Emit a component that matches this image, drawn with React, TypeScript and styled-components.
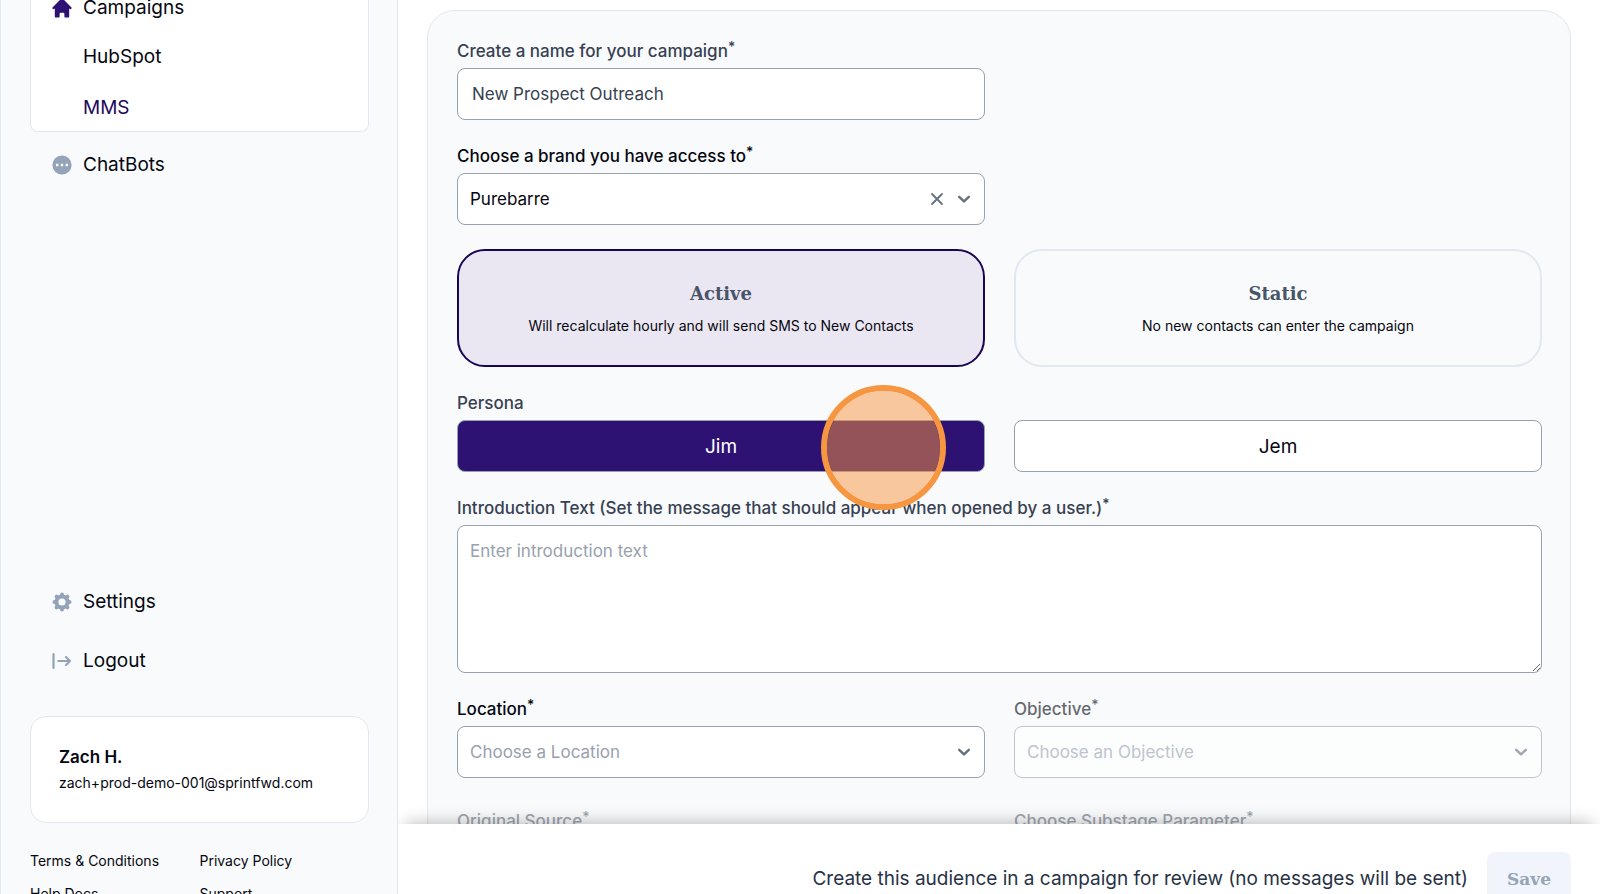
import React from "react";
import styled, { createGlobalStyle, css } from "styled-components";
import { HiHome, HiDotsCircleHorizontal } from "react-icons/hi";

const Global = createGlobalStyle`
  *, *::before, *::after { box-sizing: border-box; }
  html, body { margin: 0; height: 100%; overflow: hidden; }
  body { background: #fff; color: #05060f; font-family: Inter, "Liberation Sans", sans-serif; }
  button, input, select, textarea { font: inherit; }
`;

const slab = css`
  font-family: "DejaVu Serif", "Liberation Serif", serif;
  font-weight: 700;
`;

const Shell = styled.div`
  display: grid;
  grid-template-columns: 398px minmax(0, 1fr);
  height: calc(100vh + 40px);
`;

const Sidebar = styled.aside`
  display: flex;
  flex-direction: column;
  padding: 0 28px 0 29px;
  background: #f8fafc;
  border: 1px solid #e2e8f0;
  border-width: 0 1px;
`;

const NavGroup = styled.nav`
  margin-top: -14px;
  padding: 0 19px;
  background: #fff;
  border: 1px solid #e2e8f0;
  border-top: 0;
  border-radius: 0 0 8px 8px;
`;

const NavLink = styled.a<{ $active?: boolean; $height: number }>`
  display: flex;
  align-items: center;
  height: ${(p) => p.$height}px;
  color: ${(p) => (p.$active ? "#1d0a5c" : "#05060f")};
  font-size: 19px;
  line-height: 28px;
  text-decoration: none;
`;

const SubLink = styled(NavLink)`
  padding: 3px 0 0 33px;
`;

const IconSlot = styled.span<{ $color: string }>`
  display: flex;
  justify-content: center;
  width: 24px;
  margin-right: 9px;
  color: ${(p) => p.$color};
`;

const NavSection = styled.nav`
  padding: 0 20px;
`;

const Spacer = styled.div`
  flex: 1;
`;

const Profile = styled.section`
  margin-top: 26px;
  padding: 27px 28px 26px;
  background: #fff;
  border: 1px solid #e2e8f0;
  border-radius: 16px;
`;

const ProfileName = styled.div`
  font-size: 17px;
  font-weight: 600;
  line-height: 26px;
`;

const ProfileMail = styled.div`
  font-size: 14px;
  line-height: 26px;
`;

const LegalLinks = styled.nav`
  display: grid;
  grid-template-columns: 1fr 1fr;
  row-gap: 9px;
  padding: 26px 0 28px;
`;

const LegalLink = styled.a`
  color: #05060f;
  font-size: 14px;
  line-height: 24px;
  text-decoration: none;
`;

const Main = styled.main`
  display: flex;
  flex-direction: column;
  min-height: 0;
  overflow: hidden;
`;

const Content = styled.div`
  flex: 1;
  min-height: 0;
  overflow: hidden;
  padding: 10px 29px 0;
`;

const FormCard = styled.form`
  display: grid;
  grid-template-columns: 1fr 1fr;
  column-gap: 29px;
  row-gap: 24px;
  padding: 28px 28px 28px 29px;
  background: #f8fafc;
  border: 1px solid #e2e8f0;
  border-radius: 28px;
`;

const Field = styled.div<{ $column?: string; $fade?: number; $spaced?: boolean }>`
  display: flex;
  flex-direction: column;
  position: relative;
  grid-column: ${(p) => p.$column ?? "auto"};
  margin-top: ${(p) => (p.$spaced ? 7 : 0)}px;
  opacity: ${(p) => p.$fade ?? 1};
`;

const Label = styled.label<{ $tone?: string }>`
  height: 29px;
  color: ${(p) => p.$tone ?? "#374151"};
  font-size: 17px;
  font-weight: 500;
  line-height: 24px;

  sup {
    font-size: 14px;
    line-height: 0;
    vertical-align: 5px;
  }
`;

const controlBox = css`
  width: 100%;
  background: #fff;
  border: 1px solid #98a1ae;
  border-radius: 8px;
  outline: none;
`;

const TextInput = styled.input`
  ${controlBox}
  height: 52px;
  padding: 0 14px;
  color: #374151;
  font-size: 17px;
`;

const SelectBox = styled.div`
  position: relative;
`;

const Select = styled.select<{ $placeholder?: boolean }>`
  ${controlBox}
  display: block;
  height: 52px;
  padding: 0 80px 0 12px;
  appearance: none;
  color: ${(p) => (p.$placeholder ? "#98a1ae" : "#05060f")};
  font-size: 17px;
  opacity: 1;
`;

const SelectTools = styled.div`
  position: absolute;
  top: 0;
  right: 13px;
  bottom: 0;
  display: flex;
  align-items: center;
  gap: 12px;
  color: #64707f;
  pointer-events: none;
`;

const ClearButton = styled.button`
  display: flex;
  padding: 0;
  background: none;
  border: 0;
  color: inherit;
  pointer-events: auto;
`;

const ModeGroup = styled.div`
  display: grid;
  grid-column: 1 / -1;
  grid-template-columns: 1fr 1fr;
  column-gap: 29px;
`;

const ModeCard = styled.button<{ $active?: boolean }>`
  display: flex;
  flex-direction: column;
  align-items: center;
  justify-content: center;
  gap: 8px;
  height: 118px;
  background: ${(p) => (p.$active ? "#ebe7f2" : "transparent")};
  border: 2px solid ${(p) => (p.$active ? "#1a0554" : "#e2e8f0")};
  border-radius: 28px;
`;

const ModeTitle = styled.span`
  ${slab}
  color: #475569;
  font-size: 18px;
  line-height: 28px;
`;

const ModeText = styled.span`
  color: #05060f;
  font-size: 14px;
  line-height: 20px;
`;

const PersonaField = styled(Field)`
  justify-content: flex-end;
`;

const PersonaButton = styled.button<{ $active?: boolean }>`
  ${controlBox}
  height: 52px;
  background: ${(p) => (p.$active ? "#2e1273" : "#fff")};
  color: ${(p) => (p.$active ? "#fff" : "#05060f")};
  font-size: 19px;
`;

const TextArea = styled.textarea`
  ${controlBox}
  height: 148px;
  padding: 13px 12px;
  font-size: 17px;
  line-height: 24px;

  &::placeholder { color: #98a1ae; }
`;

const ClickMarker = styled.span`
  position: absolute;
  right: 39px;
  bottom: -38px;
  width: 125px;
  height: 125px;
  border: 6px solid #f79640;
  border-radius: 50%;
  background: rgba(248, 148, 62, 0.5);
  background-clip: padding-box;
  pointer-events: none;
  z-index: 1;
`;

const ActionBar = styled.footer`
  position: relative;
  display: flex;
  align-items: center;
  justify-content: flex-end;
  gap: 19px;
  padding: 28px 29px;
  background: #fff;
  box-shadow: 0 -8px 16px -8px rgba(0, 0, 0, 0.3);
`;

const ActionNote = styled.p`
  margin: 0;
  color: #273244;
  font-size: 19px;
  line-height: 28px;
`;

const SaveButton = styled.button`
  ${slab}
  height: 54px;
  padding: 0 20px;
  background: #f1f4fa;
  border: 0;
  border-radius: 8px;
  color: #94a3b8;
  font-size: 17px;
`;

const Chevron = () => (
  <svg width="16" height="16" viewBox="0 0 16 16" fill="none" stroke="currentColor" strokeWidth="2.4" strokeLinecap="round" strokeLinejoin="round">
    <path d="M3.2 5.8 8 10.4 12.8 5.8" />
  </svg>
);

const Cross = () => (
  <svg width="14" height="14" viewBox="0 0 14 14" fill="none" stroke="currentColor" strokeWidth="1.8" strokeLinecap="round">
    <path d="M2 2 12 12M12 2 2 12" />
  </svg>
);

/* Eight rounded teeth around a ring with an open hub. */
const Gear = () => (
  <svg width="24" height="24" viewBox="0 0 24 24" fill="none" stroke="currentColor">
    <circle cx="12" cy="12" r="5.6" strokeWidth="4" />
    <path
      strokeWidth="4"
      strokeLinecap="round"
      d="M12 4.6V4.5M12 19.5V19.4M4.6 12H4.5M19.5 12H19.4M6.7 6.7 6.6 6.6M17.4 17.4 17.3 17.3M6.7 17.3 6.6 17.4M17.4 6.6 17.3 6.7"
    />
  </svg>
);

const Exit = () => (
  <svg width="20" height="18" viewBox="0 0 20 18" fill="none" stroke="currentColor" strokeWidth="2.2" strokeLinecap="round" strokeLinejoin="round">
    <path d="M1.5 2V16M6.5 9H18M14 5 18 9 14 13" />
  </svg>
);

const Required = () => <sup>*</sup>;

export default function App() {
  return (
    <>
      <Global />
      <Shell>
        <Sidebar>
          <NavGroup aria-label="Campaigns">
            <NavLink href="#campaigns" $height={43}>
              <IconSlot $color="#2e1273"><HiHome size={24} /></IconSlot>
              Campaigns
            </NavLink>
            <SubLink href="#hubspot" $height={52}>HubSpot</SubLink>
            <SubLink href="#mms" $height={50} $active>MMS</SubLink>
          </NavGroup>
          <NavSection aria-label="Tools">
            <NavLink href="#chatbots" $height={65}>
              <IconSlot $color="#94a3b8"><HiDotsCircleHorizontal size={24} /></IconSlot>
              ChatBots
            </NavLink>
          </NavSection>
          <Spacer />
          <NavSection aria-label="Account">
            <NavLink href="#settings" $height={59}>
              <IconSlot $color="#94a3b8"><Gear /></IconSlot>
              Settings
            </NavLink>
            <NavLink href="#logout" $height={59}>
              <IconSlot $color="#94a3b8"><Exit /></IconSlot>
              Logout
            </NavLink>
          </NavSection>
          <Profile>
            <ProfileName>Zach H.</ProfileName>
            <ProfileMail>zach+prod-demo-001@sprintfwd.com</ProfileMail>
          </Profile>
          <LegalLinks aria-label="Legal">
            <LegalLink href="#terms">Terms &amp; Conditions</LegalLink>
            <LegalLink href="#privacy">Privacy Policy</LegalLink>
            <LegalLink href="#help">Help Docs</LegalLink>
            <LegalLink href="#support">Support</LegalLink>
          </LegalLinks>
        </Sidebar>
        <Main>
          <Content>
            <FormCard onSubmit={(e) => e.preventDefault()}>
              <Field $column="1">
                <Label htmlFor="name">Create a name for your campaign<Required /></Label>
                <TextInput id="name" defaultValue="New Prospect Outreach" />
              </Field>
              <Field $column="1">
                <Label htmlFor="brand" $tone="#05060f">Choose a brand you have access to<Required /></Label>
                <SelectBox>
                  <Select id="brand"><option>Purebarre</option></Select>
                  <SelectTools>
                    <ClearButton type="button" aria-label="Clear brand"><Cross /></ClearButton>
                    <Chevron />
                  </SelectTools>
                </SelectBox>
              </Field>
              <ModeGroup>
                <ModeCard type="button" $active aria-pressed="true">
                  <ModeTitle>Active</ModeTitle>
                  <ModeText>Will recalculate hourly and will send SMS to New Contacts</ModeText>
                </ModeCard>
                <ModeCard type="button" aria-pressed="false">
                  <ModeTitle>Static</ModeTitle>
                  <ModeText>No new contacts can enter the campaign</ModeText>
                </ModeCard>
              </ModeGroup>
              <PersonaField>
                <Label htmlFor="jim">Persona</Label>
                <PersonaButton id="jim" type="button" $active>Jim</PersonaButton>
                <ClickMarker />
              </PersonaField>
              <PersonaField>
                <PersonaButton type="button">Jem</PersonaButton>
              </PersonaField>
              <Field $column="1 / -1">
                <Label htmlFor="intro">Introduction Text (Set the message that should appear when opened by a user.)<Required /></Label>
                <TextArea id="intro" placeholder="Enter introduction text" />
              </Field>
              <Field>
                <Label htmlFor="location" $tone="#05060f">Location<Required /></Label>
                <SelectBox>
                  <Select id="location" $placeholder><option>Choose a Location</option></Select>
                  <SelectTools><Chevron /></SelectTools>
                </SelectBox>
              </Field>
              <Field $fade={0.6}>
                <Label htmlFor="objective" $tone="#05060f">Objective<Required /></Label>
                <SelectBox>
                  <Select id="objective" $placeholder disabled><option>Choose an Objective</option></Select>
                  <SelectTools><Chevron /></SelectTools>
                </SelectBox>
              </Field>
              <Field $fade={0.45} $spaced>
                <Label htmlFor="source">Original Source<Required /></Label>
                <TextInput id="source" disabled />
              </Field>
              <Field $fade={0.45} $spaced>
                <Label htmlFor="substage">Choose Substage Parameter<Required /></Label>
                <TextInput id="substage" disabled />
              </Field>
            </FormCard>
          </Content>
          <ActionBar>
            <ActionNote>Create this audience in a campaign for review (no messages will be sent)</ActionNote>
            <SaveButton type="button">Save</SaveButton>
          </ActionBar>
        </Main>
      </Shell>
    </>
  );
}
